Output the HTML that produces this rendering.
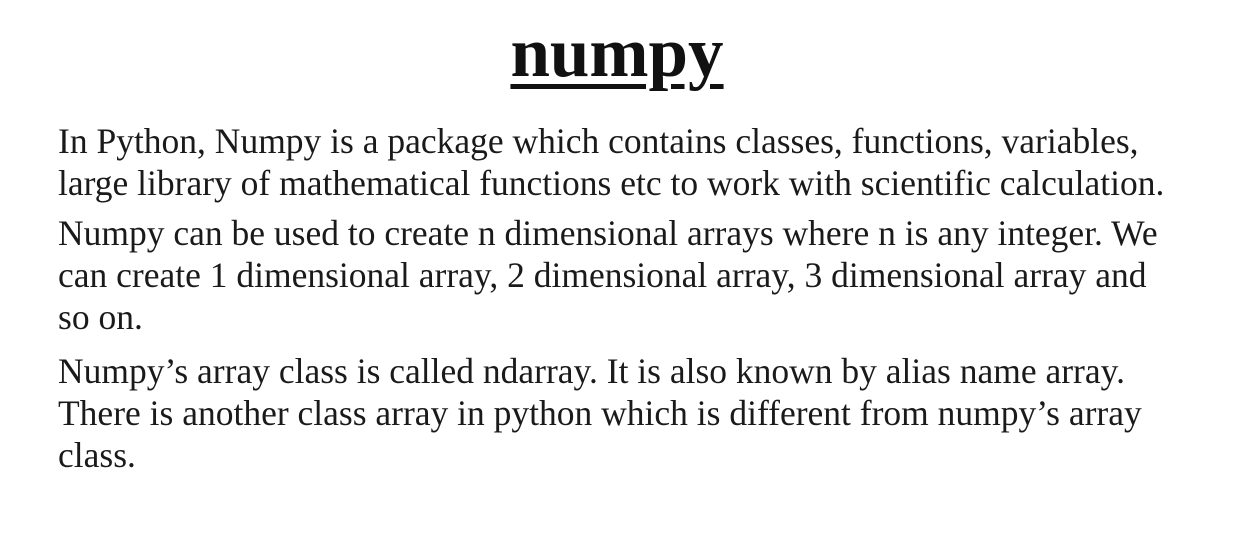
<!DOCTYPE html>
<html><head><meta charset="utf-8"><style>
html,body{margin:0;padding:0;background:#fff;width:1234px;height:534px;overflow:hidden;}
.t{position:absolute;left:0;width:1234px;text-align:center;top:13px;font-family:"Liberation Serif",serif;font-weight:bold;font-size:71px;line-height:80px;color:#111;text-decoration:underline;text-decoration-thickness:5px;text-underline-offset:8px;}
.l{position:absolute;left:58px;font-family:"Liberation Serif",serif;font-size:35.5px;line-height:42px;color:#1a1a1a;white-space:nowrap;}
</style></head><body>
<div class="t">numpy</div>
<div class="l" style="top:120px">In Python, Numpy is a package which contains classes, functions, variables,</div>
<div class="l" style="top:162px">large library of mathematical functions etc to work with scientific calculation.</div>
<div class="l" style="top:212px">Numpy can be used to create n dimensional arrays where n is any integer. We</div>
<div class="l" style="top:254px">can create 1 dimensional array, 2 dimensional array, 3 dimensional array and</div>
<div class="l" style="top:296px">so on.</div>
<div class="l" style="top:350px">Numpy’s array class is called ndarray. It is also known by alias name array.</div>
<div class="l" style="top:392px">There is another class array in python which is different from numpy’s array</div>
<div class="l" style="top:434px">class.</div>
</body></html>
